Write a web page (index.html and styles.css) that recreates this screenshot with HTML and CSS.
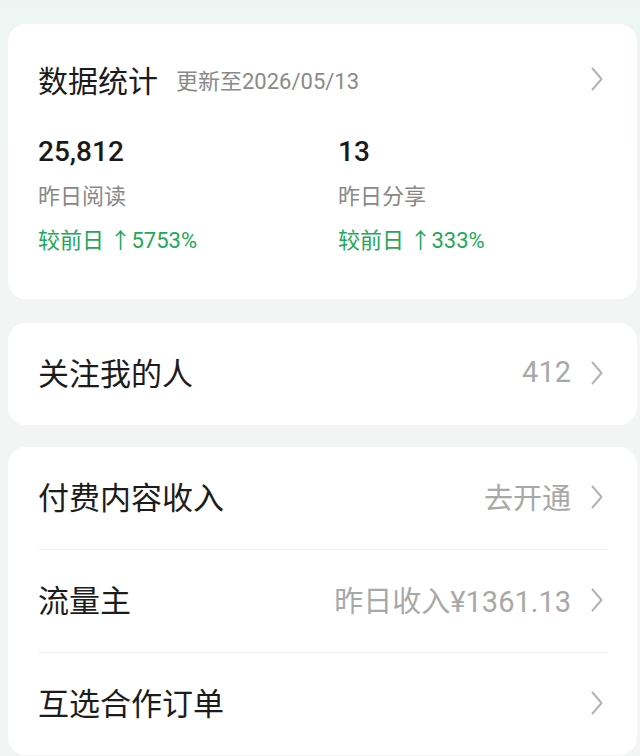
FILE: index.html
```html
<!DOCTYPE html>
<html lang="zh-CN">
<head>
    <meta charset="UTF-8">
    <title>创作者数据</title>
    <link rel="stylesheet" href="styles.css">
</head>
<body>
    <div class="page">
        <section class="card stats">
            <div class="stats-head">
                <span class="title">数据统计</span>
                <span class="updated">更新至2026/05/13</span>
                <svg class="chev" width="14" height="24" viewBox="0 0 14 24"><path d="M2.5 1.5 L11.5 12 L2.5 22.5"/></svg>
            </div>
            <div class="stats-grid">
                <div class="stat">
                    <div class="num">25,812</div>
                    <div class="label">昨日阅读</div>
                    <div class="trend">较前日 ↑5753%</div>
                </div>
                <div class="stat">
                    <div class="num">13</div>
                    <div class="label">昨日分享</div>
                    <div class="trend">较前日 ↑333%</div>
                </div>
            </div>
        </section>

        <section class="card">
            <div class="row">
                <span class="title">关注我的人</span>
                <span class="value">412</span>
                <svg class="chev" width="14" height="24" viewBox="0 0 14 24"><path d="M2.5 1.5 L11.5 12 L2.5 22.5"/></svg>
            </div>
        </section>

        <section class="card list">
            <div class="row">
                <span class="title">付费内容收入</span>
                <span class="value">去开通</span>
                <svg class="chev" width="14" height="24" viewBox="0 0 14 24"><path d="M2.5 1.5 L11.5 12 L2.5 22.5"/></svg>
            </div>
            <div class="row">
                <span class="title">流量主</span>
                <span class="value">昨日收入¥1361.13</span>
                <svg class="chev" width="14" height="24" viewBox="0 0 14 24"><path d="M2.5 1.5 L11.5 12 L2.5 22.5"/></svg>
            </div>
            <div class="row">
                <span class="title">互选合作订单</span>
                <span class="value"></span>
                <svg class="chev" width="14" height="24" viewBox="0 0 14 24"><path d="M2.5 1.5 L11.5 12 L2.5 22.5"/></svg>
            </div>
        </section>
    </div>
</body>
</html>
```

FILE: styles.css
```css
html, body { margin: 0; height: 100%; }
body {
    background: linear-gradient(#edf5f2, #f3f5f4 320px);
    font-family: Roboto, "Noto Sans CJK SC", sans-serif;
    color: #1c1c1c;
}
.page {
    padding: 24px 3px 0 8px;
    display: flex;
    flex-direction: column;
    gap: 24px;
}
.card {
    background: #fff;
    border-radius: 18px;
    padding: 0 29px 0 30px;
}
.list { margin-top: -2px; }
.title { font-size: 30px; color: #1c1c1c; }
.chev { flex: none; margin-right: 4px; }
.chev path {
    fill: none;
    stroke: #b3b3b3;
    stroke-width: 2;
    stroke-linecap: round;
    stroke-linejoin: round;
}

/* stats card */
.stats { padding-bottom: 44px; }
.stats-head {
    display: flex;
    align-items: center;
    height: 46px;
    padding-top: 32px;
}
.updated {
    font-size: 22px;
    color: #8a8a8a;
    margin-left: 18px;
    flex: 1;
}
.stats-grid {
    display: grid;
    grid-template-columns: 300px 1fr;
    margin-top: 32px;
}
.num {
    font-size: 28px;
    font-weight: 500;
    line-height: 36px;
    color: #1a1a1a;
}
.label {
    font-size: 22px;
    line-height: 28px;
    color: #888;
    margin-top: 13px;
}
.trend {
    font-size: 22px;
    line-height: 28px;
    color: #22a85a;
    margin-top: 16px;
}

/* list rows */
.row {
    display: flex;
    align-items: center;
    height: 97px;
    padding-bottom: 5px;
}
.row + .row { border-top: 1px solid #f1f1f1; }
.row .title { flex: 1; font-size: 31px; }
.row .chev { margin-top: 3px; }
.value {
    font-size: 29px;
    color: #a8a8a8;
    margin-right: 19px;
}
```
